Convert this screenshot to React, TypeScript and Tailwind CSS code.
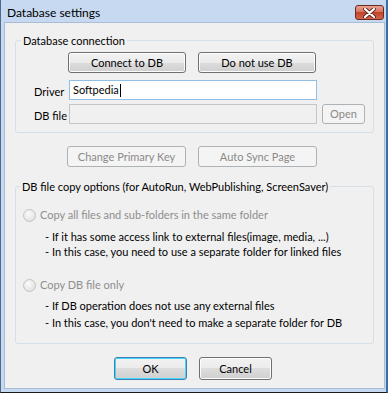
import React from "react";

function Btn({
  children,
  className,
  disabled,
  isDefault,
}: {
  children: React.ReactNode;
  className: string;
  disabled?: boolean;
  isDefault?: boolean;
}) {
  if (disabled) {
    return (
      <div
        className={
          "flex items-center justify-center rounded-[3px] border border-[#adb2b5] bg-[#f4f4f4] text-[#8a8a8a] " +
          className
        }
      >
        {children}
      </div>
    );
  }
  if (isDefault) {
    return (
      <div
        className={
          "flex items-center justify-center rounded-[3px] border border-[#3c7fb1] shadow-[inset_0_0_0_1px_#48d7fb] bg-[linear-gradient(to_bottom,#f2f2f2_0%,#ebebeb_50%,#dddddd_50%,#cfcfcf_100%)] text-black " +
          className
        }
      >
        {children}
      </div>
    );
  }
  return (
    <div
      className={
        "flex items-center justify-center rounded-[3px] border border-[#707070] shadow-[inset_0_0_0_1px_#fcfcfc] bg-[linear-gradient(to_bottom,#f2f2f2_0%,#ebebeb_50%,#dddddd_50%,#cfcfcf_100%)] text-black " +
        className
      }
    >
      {children}
    </div>
  );
}

function Radio() {
  return (
    <div className="h-[13px] w-[13px] shrink-0 rounded-full border border-[#c4c4c4] bg-[radial-gradient(circle_at_40%_35%,#fafafa_0%,#e4e4e4_70%,#d6d6d6_100%)]" />
  );
}

export default function App() {
  return (
    <div className="flex h-[393px] w-[388px] flex-col whitespace-nowrap border-b border-l border-r-2 border-b-[#1a1a1a] border-l-[#4a6b8f] border-r-[#3a6ea5] bg-[#c6d9f0] pb-[3px] pl-[3px] pr-[1px] font-['Lato',sans-serif] text-[11px] leading-[16px] text-black">
      {/* Title bar */}
      <div className="flex h-[22px] items-start justify-between pl-[3px] pr-[1px] pt-[5px]">
        <span className="text-[12px] leading-[16px] text-black">Database settings</span>
        <div className="flex h-[15px] w-[29px] items-center justify-center rounded-[3px] border border-[#6a2a22] bg-[linear-gradient(to_bottom,#e8a493_0%,#d66e58_50%,#c2442b_50%,#d5634b_100%)]">
          <svg width="13" height="10" viewBox="0 0 13 10">
            <path
              d="M2 1 L11 9 M11 1 L2 9"
              stroke="#5a2a22"
              strokeWidth="4"
              strokeLinecap="round"
            />
            <path
              d="M2 1 L11 9 M11 1 L2 9"
              stroke="#ffffff"
              strokeWidth="2.2"
              strokeLinecap="round"
            />
          </svg>
        </div>
      </div>

      {/* Client area */}
      <div className="flex flex-1 flex-col border border-[#aabdd4] bg-[#f0f0f0]">
        {/* Group 1 */}
        <div className="relative ml-[10px] mt-[17px] h-[93px] w-[359px] shrink-0 rounded-[3px] border border-[#d5dfe5]">
          <span className="absolute -top-[8px] left-[5px] bg-[#f0f0f0] px-[2px]">
            Database connection
          </span>
          <div className="flex gap-[12px] pl-[52px] pt-[11px]">
            <Btn className="h-[21px] w-[118px]">Connect to DB</Btn>
            <Btn className="h-[21px] w-[118px]">Do not use DB</Btn>
          </div>
          <div className="mt-[7px] flex h-[20px] items-center pl-[18px]">
            <span className="w-[35px] shrink-0 pt-[3px]">Driver</span>
            <div className="flex h-[20px] w-[248px] items-center border border-[#8fbfe6] bg-white pl-[3px]">
              <span>Softpedia</span>
              <span className="ml-[1px] h-[13px] w-[1px] bg-black" />
            </div>
          </div>
          <div className="mt-[4px] flex h-[20px] items-center pl-[18px]">
            <span className="w-[35px] shrink-0 pt-[3px]">DB file</span>
            <div className="h-[20px] w-[248px] shrink-0 border border-[#c6c6c6] bg-[#f0f0f0]" />
            <Btn disabled className="ml-[5px] h-[20px] w-[43px]">
              Open
            </Btn>
          </div>
        </div>

        {/* Middle buttons */}
        <div className="ml-[62px] mt-[13px] flex gap-[12px]">
          <Btn disabled className="h-[21px] w-[119px]">
            Change Primary Key
          </Btn>
          <Btn disabled className="h-[21px] w-[119px]">
            Auto Sync Page
          </Btn>
        </div>

        {/* Group 2 */}
        <div className="relative ml-[10px] mt-[19px] h-[158px] w-[359px] shrink-0 rounded-[3px] border border-[#d5dfe5]">
          <span className="absolute -top-[8px] left-[4px] bg-[#f0f0f0] px-[2px]">
            DB file copy options (for AutoRun, WebPublishing, ScreenSaver)
          </span>
          <div className="flex flex-col pt-[20px]">
            <div className="flex h-[16px] items-center gap-[4px] pl-[7px] text-[#8e8e8e]">
              <Radio />
              <span>Copy all files and sub-folders in the same folder</span>
            </div>
            <div className="mt-[6px] h-[15px] pl-[29px] leading-[15px]">
              - If it has some access link to external files(image, media, ...)
            </div>
            <div className="h-[15px] pl-[29px] leading-[15px]">
              - In this case, you need to use a separate folder for linked files
            </div>
            <div className="mt-[18px] flex h-[16px] items-center gap-[4px] pl-[7px] text-[#8e8e8e]">
              <Radio />
              <span>Copy DB file only</span>
            </div>
            <div className="mt-[5px] h-[15px] pl-[29px] leading-[15px]">
              - If DB operation does not use any external files
            </div>
            <div className="mt-[2px] h-[15px] pl-[29px] leading-[15px]">
              - In this case, you don't need to make a separate folder for DB
            </div>
          </div>
        </div>

        {/* OK / Cancel */}
        <div className="ml-[109px] mt-[13px] flex gap-[12px]">
          <Btn isDefault className="h-[23px] w-[73px]">
            OK
          </Btn>
          <Btn className="h-[23px] w-[73px]">Cancel</Btn>
        </div>
      </div>
    </div>
  );
}
